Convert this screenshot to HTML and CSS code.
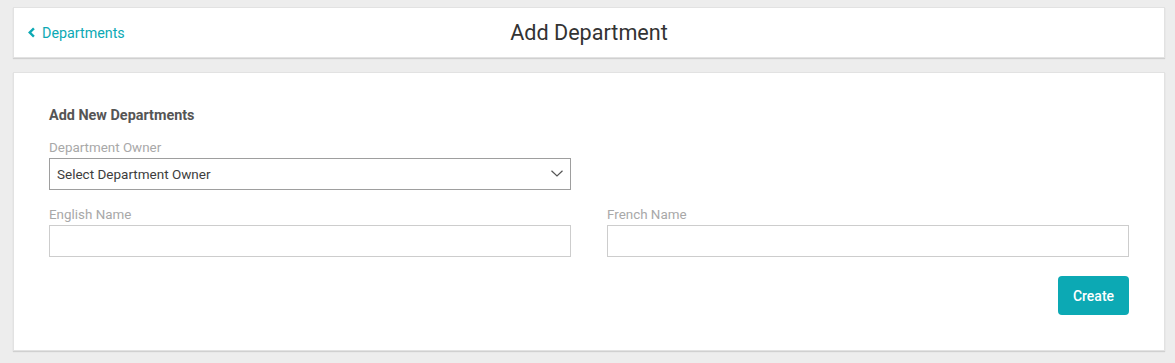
FILE: index.html
```html
<!DOCTYPE html>
<html lang="en">
  <head>
    <meta charset="UTF-8" />
    <meta name="viewport" content="width=device-width, initial-scale=1.0" />
    <title>Add Department</title>
    <link rel="stylesheet" href="styles.css">
  </head>
  <body>
    <header class="topbar">
      <a class="back-link" href="#">
        <svg viewBox="0 0 8 10"><path d="M6.2 1.2L2.4 5 6.2 8.8" /></svg>
        Departments
      </a>
      <h1 class="page-title">Add Department</h1>
      <div></div>
    </header>

    <main class="card">
      <h2 class="section-title">Add New Departments</h2>

      <div class="form-grid">
        <div class="field">
          <label for="owner">Department Owner</label>
          <div class="select-wrap">
            <select id="owner">
              <option>Select Department Owner</option>
            </select>
            <svg viewBox="0 0 12 7"><path d="M0.5 0.8L6 6 11.5 0.8" /></svg>
          </div>
        </div>
        <div></div>

        <div class="field">
          <label for="nameEn">English Name</label>
          <input id="nameEn" type="text" />
        </div>
        <div class="field">
          <label for="nameFr">French Name</label>
          <input id="nameFr" type="text" />
        </div>
      </div>

      <div class="actions">
        <button class="btn-primary">Create</button>
      </div>
    </main>
  </body>
</html>
```

FILE: styles.css
```css
:root {
  --bg: #ededed;
  --card: #ffffff;
  --accent: #0ca9b4;
  --text: #3d3d3d;
  --muted: #a8a8a8;
  --border: #cdcdcd;
}

body {
  margin: 0;
  padding: 7px 10px 12px 13px;
  background: var(--bg);
  color: var(--text);
  font-family: Roboto, "Liberation Sans", sans-serif;
}

.topbar {
  display: grid;
  grid-template-columns: 1fr auto 1fr;
  align-items: center;
  height: 51px;
  box-sizing: border-box;
  padding: 0 13px;
  background: var(--card);
  border: 1px solid #e2e2e2;
  box-shadow: 0 1px 1px rgba(0, 0, 0, 0.12);
}

.back-link {
  display: flex;
  align-items: center;
  gap: 6px;
  color: var(--accent);
  text-decoration: none;
  font-size: 14.3px;
}

.back-link svg {
  width: 9px;
  height: 11px;
  fill: none;
  stroke: var(--accent);
  stroke-width: 2.2;
}

.page-title {
  margin: 0;
  font-size: 21.6px;
  font-weight: 400;
  color: #333;
}

.card {
  display: block;
  margin-top: 14px;
  padding: 35px 35px 35px;
  background: var(--card);
  border: 1px solid #e2e2e2;
  box-shadow: 0 1px 1px rgba(0, 0, 0, 0.12);
}

.section-title {
  margin: 0 0 16px;
  font-size: 14.4px;
  line-height: 16px;
  font-weight: 700;
  color: #555;
}

.form-grid {
  display: grid;
  grid-template-columns: 1fr 1fr;
  column-gap: 36px;
  row-gap: 17px;
}

.field label {
  display: block;
  margin-bottom: 2px;
  font-size: 13.4px;
  line-height: 16px;
  color: var(--muted);
}

.field input,
.field select {
  display: block;
  width: 100%;
  height: 32px;
  box-sizing: border-box;
  margin: 0;
  border: 1px solid var(--border);
  border-radius: 0;
  background: #fff;
  font-family: inherit;
  font-size: 13.5px;
  color: var(--text);
  padding: 0 7px;
  outline: none;
}

.select-wrap {
  position: relative;
}

.field select {
  appearance: none;
  -webkit-appearance: none;
  border-color: #9e9e9e;
}

.select-wrap svg {
  position: absolute;
  right: 8px;
  top: 12px;
  width: 12px;
  height: 7px;
  fill: none;
  stroke: #555;
  stroke-width: 1.2;
  pointer-events: none;
}

.actions {
  display: flex;
  justify-content: flex-end;
  margin-top: 19px;
}

.btn-primary {
  width: 71px;
  height: 39px;
  border: none;
  border-radius: 4px;
  background: var(--accent);
  color: #fff;
  font-family: inherit;
  font-size: 14px;
  font-weight: 500;
  cursor: pointer;
}
```
